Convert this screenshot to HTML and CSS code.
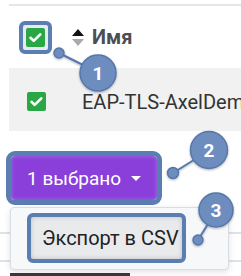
FILE: index.html
```html
<!DOCTYPE html>
<html lang="ru">
<head>
    <meta charset="UTF-8">
    <meta name="viewport" content="width=device-width, initial-scale=1.0">
    <title>Экспорт</title>
    <link rel="stylesheet" href="styles.css">
</head>
<body>
    <div class="table">
        <div class="table-head">
            <div class="check-mark">
                <span class="checkbox">
                    <svg viewBox="0 0 19 19" width="19" height="19"><path d="M4.5 9.8l3.2 3.1 6.6-6.6" fill="none" stroke="#fff" stroke-width="2.6" stroke-linecap="round" stroke-linejoin="round"/></svg>
                </span>
            </div>
            <span class="sort">
                <span class="sort-up"></span>
                <span class="sort-down"></span>
            </span>
            <span class="head-title">Имя</span>
        </div>
        <div class="table-row">
            <span class="checkbox">
                <svg viewBox="0 0 19 19" width="19" height="19"><path d="M4.5 9.8l3.2 3.1 6.6-6.6" fill="none" stroke="#fff" stroke-width="2.6" stroke-linecap="round" stroke-linejoin="round"/></svg>
            </span>
            <span class="row-name">EAP-TLS-AxelDemo</span>
        </div>
    </div>

    <div class="toolbar">
        <div class="dropdown">
            <button class="btn-selected">1 выбрано <span class="caret"></span></button>
            <div class="dropdown-menu">
                <div class="dropdown-item">Экспорт в CSV</div>
            </div>
        </div>
    </div>

    <div class="list">
        <div class="list-row"></div>
        <div class="list-row"></div>
        <div class="list-thumb"></div>
    </div>

    <svg class="callouts" width="241" height="276" viewBox="0 0 241 276">
        <defs>
            <filter id="shadow" x="-30%" y="-30%" width="160%" height="160%">
                <feDropShadow dx="0" dy="1" stdDeviation="1.2" flood-color="#000" flood-opacity="0.3"/>
            </filter>
        </defs>
        <g filter="url(#shadow)" fill="#6d8dbf" stroke="#5677a9" stroke-width="1.5">
            <line x1="59" y1="53" x2="85" y2="66" stroke-width="2"/>
            <circle cx="59" cy="53" r="5"/>
            <circle cx="98" cy="73" r="18"/>

            <line x1="173" y1="173" x2="197" y2="158" stroke-width="2"/>
            <circle cx="173" cy="173" r="5.5"/>
            <circle cx="209" cy="150" r="18.5"/>

            <line x1="198" y1="240" x2="208" y2="224" stroke-width="2"/>
            <circle cx="198" cy="240" r="5"/>
            <circle cx="216" cy="210" r="17"/>
        </g>
        <g class="callout-num" fill="#fff" text-anchor="middle">
            <text x="98" y="80">1</text>
            <text x="209" y="157">2</text>
            <text x="216" y="217">3</text>
        </g>
    </svg>
</body>
</html>
```

FILE: styles.css
```css
body {
    margin: 0;
    padding-top: 4px;
    width: 241px;
    height: 276px;
    overflow: hidden;
    position: relative;
    background: #fff;
    font-family: Roboto, "Liberation Sans", sans-serif;
    color: #212529;
}

.table {
    margin-left: 9px;
    border-top: 2px solid #e3e6ea;
    overflow: hidden;
}

.table-head {
    height: 62px;
    display: flex;
    align-items: center;
    padding-left: 10px;
}

.check-mark {
    width: 25px;
    height: 25px;
    border: 4px solid #5a7db2;
    border-radius: 6px;
    background: #e6ebf2;
    display: flex;
    align-items: center;
    justify-content: center;
}

.checkbox {
    width: 19px;
    height: 19px;
    flex: none;
    border-radius: 2px;
    background: #2aa745;
    display: flex;
}

.sort {
    display: flex;
    flex-direction: column;
    gap: 3px;
    margin-left: 20px;
}

.sort-up,
.sort-down {
    width: 0;
    height: 0;
    border-left: 6.5px solid transparent;
    border-right: 6.5px solid transparent;
}

.sort-up {
    border-bottom: 7px solid #111;
}

.sort-down {
    border-top: 7px solid #aaa;
}

.head-title {
    margin-left: 8px;
    font-size: 20px;
    font-weight: bold;
    color: #4a4f55;
}

.table-row {
    height: 63px;
    display: flex;
    align-items: center;
    padding-left: 18px;
    padding-top: 4px;
    box-sizing: border-box;
    background: #f1f1f1;
    white-space: nowrap;
    overflow: hidden;
}

.row-name {
    margin-left: 36px;
    font-size: 20px;
    color: #333;
}

.toolbar {
    padding: 25px 0 0 11px;
}

.dropdown {
    position: relative;
    width: 146px;
}

.btn-selected {
    width: 146px;
    height: 44px;
    padding: 0 0 0 16px;
    display: flex;
    align-items: center;
    border: none;
    border-radius: 4px;
    outline: 5px solid #5a7db2;
    background: #8a3fdb;
    box-shadow: inset 0 0 4px rgba(255, 255, 255, 0.25);
    color: #fff;
    font-family: Roboto, "Liberation Sans", sans-serif;
    font-size: 19px;
}

.caret {
    margin-left: 10px;
    width: 0;
    height: 0;
    border-left: 5px solid transparent;
    border-right: 5px solid transparent;
    border-top: 5px solid #fff;
}

.dropdown-menu {
    position: absolute;
    top: 51px;
    left: -1px;
    width: 217px;
    height: 61px;
    border: 1px solid #d9dce0;
    border-radius: 4px;
    background: #f7f8f9;
    box-shadow: 0 2px 6px rgba(0, 0, 0, 0.12);
    z-index: 2;
}

.dropdown-item {
    position: absolute;
    top: 5px;
    left: 16px;
    width: 140px;
    height: 42px;
    padding-left: 11px;
    display: flex;
    align-items: center;
    border: 4px solid #5a7db2;
    border-radius: 6px;
    background: #e9eaec;
    box-shadow: inset 0 0 5px rgba(0, 0, 0, 0.18);
    font-size: 20px;
    color: #222;
}

.list {
    margin-top: 32px;
}

.list-row {
    height: 26px;
    border-top: 2px solid #dfe2e5;
}

.list-thumb {
    margin: -15px 0 0 10px;
    width: 120px;
    height: 4px;
    background: #3a3a3a;
}

.callouts {
    position: absolute;
    top: 0;
    left: 0;
    pointer-events: none;
    z-index: 5;
}

.callout-num {
    font-family: Roboto, "Liberation Sans", sans-serif;
    font-size: 19px;
    font-weight: bold;
}
```
